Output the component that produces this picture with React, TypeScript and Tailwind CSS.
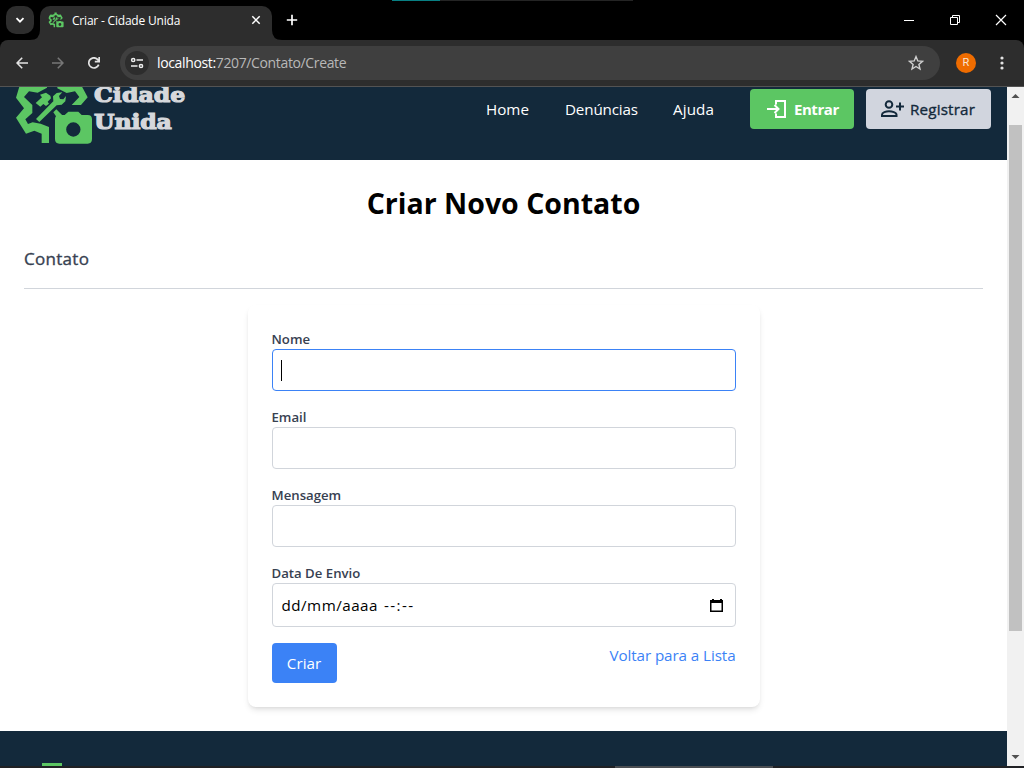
import type { ReactNode } from "react";

function GearTools({ className, viewBox }: { className: string; viewBox: string }) {
  return (
    <svg className={className} viewBox={viewBox} fill="#5cc663" aria-hidden="true">
      <path d="M246 20 234 -4 200 2 172 -12V-34H138V-12L112 2 78 -4 58 20 48 53 72 85 48 113 78 161 103 152 125 161V189H147V141L122 131 98 127 84 132 76 118 97 99V75L72 51 87 34 113 38 141 23V10H172V25L200 39 225 34 238 51 215 75H243L263 52Z" />
      <path d="M107 69 126 52 120 44 138 38 151 47 153 55 143 65 147 71 138 78 130 72 121 80Z" />
      <path d="M108 117 154 70 160 64 159 49 170 39 187 37 177 48 180 57 190 58 198 48 196 64 185 74 170 76 118 126Z" />
      <path d="M169 88 190 109H168L160 97Z" />
      <path
        fillRule="evenodd"
        d="M178 105H194L205 95H235L245 105H263Q276 105 276 118V177Q276 191 263 191H178Q165 191 165 177V118Q165 105 178 105ZM220 127A21.5 21.5 0 1 0 220 170A21.5 21.5 0 1 0 220 127Z"
      />
    </svg>
  );
}

function TabStrip() {
  return (
    <div className="relative flex h-10 bg-black">
      <div className="absolute left-[392px] top-0 flex h-px w-[241px] bg-[#242424]">
        <span className="h-px w-12 bg-[#087f83]" />
      </div>
      <button className="ml-1.5 mt-1.5 flex size-7 items-center justify-center rounded-[10px] bg-[#2d2d2d]">
        <svg className="size-3" viewBox="0 0 12 12" fill="none" stroke="#fff" strokeWidth="1.8">
          <path d="m2.5 4.2 3.5 3.5 3.5-3.5" />
        </svg>
      </button>
      <svg className="ml-[-4px] mt-[30px] size-2.5" viewBox="0 0 10 10" fill="#2d2d2d">
        <path d="M10 0V10H0Q10 10 10 0Z" />
      </svg>
      <div className="mt-1.5 flex h-[34px] w-[232px] items-start rounded-t-[10px] bg-[#2d2d2d] pl-2 pt-1.5">
        <GearTools className="size-4" viewBox="40 -40 242 242" />
        <span className="ml-2 w-[179px] whitespace-nowrap pt-px text-[12px] leading-4 tracking-[-0.2px] text-white">
          Criar - Cidade Unida
        </span>
        <svg className="mt-[3px] size-2.5 shrink-0" viewBox="0 0 10 10" stroke="#fff" strokeWidth="1.5">
          <path d="m1.3 1.3 7.4 7.4M8.7 1.3 1.3 8.7" />
        </svg>
      </div>
      <svg className="mt-[30px] size-2.5" viewBox="0 0 10 10" fill="#2d2d2d">
        <path d="M0 0V10H10Q0 10 0 0Z" />
      </svg>
      <svg className="ml-1 mt-[14px] size-3" viewBox="0 0 12 12" stroke="#fff" strokeWidth="1.7">
        <path d="M6 .8V11.2M.8 6H11.2" />
      </svg>
      <div className="ml-auto flex items-start pt-[14px]">
        <svg className="mr-[34px] size-3" viewBox="0 0 12 12" stroke="#fff" shapeRendering="crispEdges">
          <path d="M1 6.5H11" />
        </svg>
        <svg className="mr-[34px] size-3" viewBox="0 0 12 12" fill="none" stroke="#fff">
          <path d="M1.5 3.5H8.5V10.5H1.5ZM3.5 3.5V1.5H10.5V8.5H8.5" />
        </svg>
        <svg className="mr-[17px] size-3" viewBox="0 0 12 12" stroke="#fff" strokeWidth="1.2">
          <path d="m1 1 10 10M11 1 1 11" />
        </svg>
      </div>
    </div>
  );
}

function Toolbar() {
  return (
    <div className="bg-black">
      <div className="flex h-[47px] items-start rounded-t-lg border-b border-[#535353] bg-[#2d2d2d] pt-1.5">
        <svg className="ml-4 mt-[11px] size-3" viewBox="0 0 12 12" fill="none" stroke="#e3e3e3" strokeWidth="1.6">
          <path d="M12 6H1.2M6.2 .7 1 6l5.2 5.3" />
        </svg>
        <svg className="ml-6 mt-[11px] size-3" viewBox="0 0 12 12" fill="none" stroke="#777" strokeWidth="1.6">
          <path d="M0 6H10.8M5.8 .7 11 6 5.8 11.3" />
        </svg>
        <svg className="ml-6 mt-[11px] size-3" viewBox="0 0 12 12" fill="none" stroke="#e3e3e3" strokeWidth="1.7">
          <path d="M10.7 7.6A5.1 5.1 0 1 1 9.8 2.6L11 4M11.2 0V4.6H6.8" />
        </svg>
        <div className="ml-5 flex h-[34px] w-[820px] items-center rounded-full bg-[#3f3f3f] pl-[5px] pr-4">
          <span className="flex size-6 items-center justify-center rounded-full bg-[#2d2d2d]">
            <svg className="size-3.5" viewBox="0 0 14 14" fill="none" stroke="#eee" strokeWidth="1.5">
              <circle cx="3.2" cy="4" r="1.6" />
              <path d="M6.5 4H13M1 10H7.5" />
              <circle cx="11" cy="10" r="1.6" />
            </svg>
          </span>
          <span className="ml-2 whitespace-nowrap text-[14px] leading-5 tracking-[-0.36px] text-[#b8b8b8]">
            <span className="text-white">localhost:</span>7207/Contato/Create
          </span>
          <svg className="ml-auto size-4" viewBox="0 0 16 16" fill="none" stroke="#d0d0d0" strokeWidth="1.4">
            <path d="m8 1.6 1.8 4.3 4.7.4-3.6 3.1 1.1 4.6L8 11.5 4 14l1.1-4.6L1.5 6.3l4.7-.4Z" />
          </svg>
        </div>
        <span className="ml-4 mt-[7px] flex size-5 items-center justify-center rounded-full bg-[#ef6c00] font-['Roboto',sans-serif] text-[11px] text-[#f9e4d2]">
          R
        </span>
        <svg className="ml-[18px] mt-2 h-[18px] w-4" viewBox="0 0 16 18" fill="#e3e3e3">
          <circle cx="8" cy="4" r="1.6" />
          <circle cx="8" cy="9" r="1.6" />
          <circle cx="8" cy="14" r="1.6" />
        </svg>
      </div>
    </div>
  );
}

function Header() {
  return (
    <header className="flex h-[73px] items-start bg-[#13293b]">
      <GearTools className="ml-4 h-[57px] w-[76px] shrink-0" viewBox="48 21 228 171" />
      <div className="ml-0.5 mt-[-6px] flex origin-left scale-x-[1.12] flex-col whitespace-nowrap font-['DejaVu_Serif',serif] text-[21px] font-bold leading-[27px] text-[#d6d8dc] [-webkit-text-stroke:1.2px_#d6d8dc]">
        <span className="tracking-[0.1px]">Cidade</span>
        <span className="tracking-[-0.1px]">Unida</span>
      </div>
      <nav className="ml-auto mr-4 flex items-start text-[15.2px] leading-6 text-white">
        <a className="mt-2.5 w-[79px] whitespace-nowrap">Home</a>
        <a className="mt-2.5 w-[108px] whitespace-nowrap tracking-[-0.15px]">Denúncias</a>
        <a className="mt-2.5 w-[77px] whitespace-nowrap tracking-[0.1px]">Ajuda</a>
        <button className="mt-0.5 flex h-10 w-[104px] items-center rounded-[4px] bg-[#5cc663] pl-4 text-[15px] font-bold">
          <svg className="h-5 w-5" viewBox="0 0 20 20" fill="none" stroke="#fff" strokeWidth="2">
            <path d="M10 5.5V2H19V18H10V14.5M1 10H12.5M8.500 6l4 4-4 4" />
          </svg>
          <span className="ml-2 tracking-[-0.45px]">Entrar</span>
        </button>
        <button className="ml-3 mt-0.5 flex h-10 w-[125px] items-center rounded-[4px] bg-[#d1d5de] pl-[15px] text-[#13293b]">
          <svg className="h-5 w-6" viewBox="0 0 24 20" fill="none" stroke="#13293b" strokeWidth="2">
            <circle cx="8" cy="5.5" r="3.3" />
            <path d="M1 17V15.800C1 13.500 5 12.300 8 12.300S15.500 13.500 15.500 15.800V17ZM19 3.500V11.500M15 7.500H23" />
          </svg>
          <span className="ml-[5px] tracking-[0.18px] [-webkit-text-stroke:0.35px_#13293b]">Registrar</span>
        </button>
      </nav>
    </header>
  );
}

function Field({ label, active, tall, children }: { label: string; active?: boolean; tall?: boolean; children?: ReactNode }) {
  return (
    <div className="mb-4">
      <label className="block h-5 text-[13.2px] font-semibold leading-5 text-[#374151]">{label}</label>
      <div
        className={`flex items-center rounded-[4px] border px-2 ${tall ? "h-11" : "h-[42px]"} ${active ? "border-[#3b82f6]" : "border-[#d1d5db]"}`}
      >
        {children}
      </div>
    </div>
  );
}

function ContactForm() {
  return (
    <main className="h-[571px] bg-white px-6">
      <h1 className="pt-[23px] text-center text-[28.5px] font-bold leading-10 text-black">Criar Novo Contato</h1>
      <h2 className="mt-[22px] text-[17px] leading-7 tracking-[0.3px] text-[#374151] [-webkit-text-stroke:0.35px_#374151]">
        Contato
      </h2>
      <hr className="mt-[15px] border-[#d1d5db]" />
      <form className="mx-auto mt-4 h-[402px] w-[512px] rounded-lg bg-white px-6 pt-6 shadow-[0_4px_6px_-1px_rgba(0,0,0,0.1),0_2px_4px_-2px_rgba(0,0,0,0.1)]">
        <Field label="Nome" active>
          <span className="h-[21px] w-px bg-black" />
        </Field>
        <Field label="Email" />
        <Field label="Mensagem" />
        <Field label="Data De Envio" tall>
          <span className="ml-px whitespace-nowrap text-[15.2px] leading-6 tracking-[0.48px] text-black">dd/mm/aaaa</span>
          <span className="ml-1.5 whitespace-nowrap text-[15.2px] leading-6 tracking-[1.45px] text-black">--:--</span>
          <svg className="ml-auto mr-[3px] h-[15px] w-[14px]" viewBox="0 0 14 15">
            <path fillRule="evenodd" d="M2 1H4V2H10V1H12V2H13V14H0V2H2ZM1.500 5V12.500H11.500V5Z" />
          </svg>
        </Field>
        <div className="flex items-start justify-between text-[15.2px] leading-6">
          <button className="h-10 w-[65px] rounded-[4px] bg-[#3b82f6] text-white">Criar</button>
          <a className="tracking-[-0.08px] text-[#3b82f6]">Voltar para a Lista</a>
        </div>
      </form>
    </main>
  );
}

function Scrollbar() {
  return (
    <aside className="flex w-[17px] flex-col items-center bg-[#f1f1f1]">
      <svg className="mt-[7px] h-[5px] w-[9px]" viewBox="0 0 9 5" fill="#505050">
        <path d="M4.5 0 8.5 4H.5Z" />
      </svg>
      <div className="mt-[26px] h-[506px] w-[13px] bg-[#c1c1c1]" />
      <svg className="mb-1.5 mt-auto h-[5px] w-[9px]" viewBox="0 0 9 5" fill="#505050">
        <path d="M.5 0H8.5L4.5 4Z" />
      </svg>
    </aside>
  );
}

export default function App() {
  return (
    <div className="flex h-[768px] w-[1024px] flex-col overflow-hidden bg-black font-['Open_Sans','Noto_Sans',sans-serif]">
      <TabStrip />
      <Toolbar />
      <div className="flex h-[679px]">
        <div className="w-[1007px] overflow-hidden">
          <Header />
          <ContactForm />
          <footer className="flex h-[35px] items-end bg-[#13293b]">
            <span className="ml-[42px] h-[3px] w-5 bg-[#5cc663]" />
          </footer>
        </div>
        <Scrollbar />
      </div>
      <div className="flex h-0.5 bg-[#202124]">
        <span className="ml-[615px] h-0.5 w-[158px] bg-[#4b4e52]" />
      </div>
    </div>
  );
}
